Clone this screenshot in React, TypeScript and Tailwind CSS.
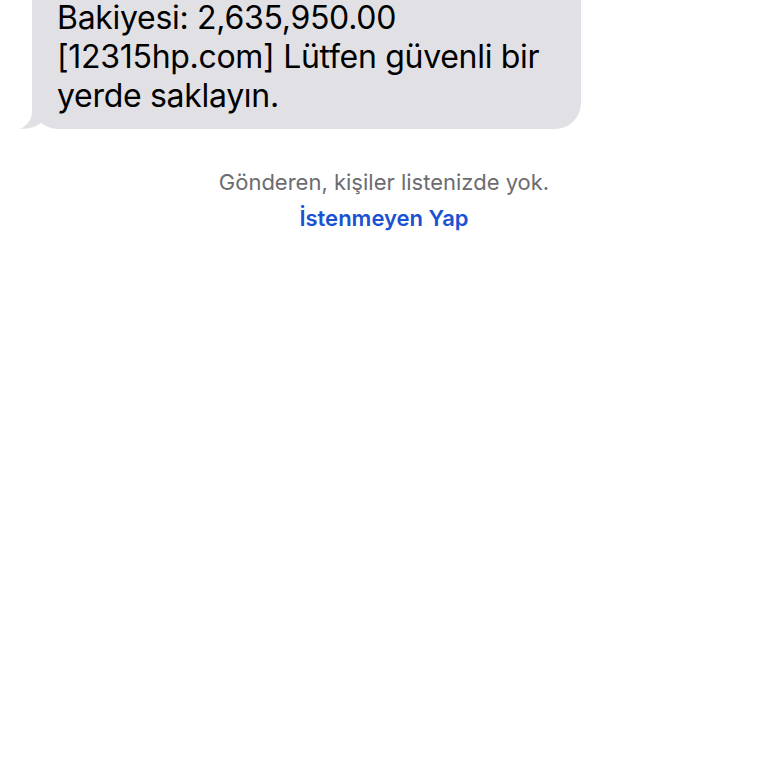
export default function App() {
    return (
        <div
            className="w-[768px] h-[768px] bg-white overflow-hidden"
            style={{ fontFamily: "Inter, 'Noto Sans', sans-serif" }}
        >
            <div className="relative ml-[32px] mt-[-40px] w-[549px]">
                <div className="bg-[#e1e1e5] rounded-[26px] pl-[25px] pr-4 pt-[38px] pb-[14px] text-[32px] leading-[39px] text-black tracking-[-0.3px]">
                    <div>Bakiyesi: 2,635,950.00</div>
                    <div>[12315hp.com] Lütfen güvenli bir</div>
                    <div>yerde saklayın.</div>
                </div>
                <svg
                    className="absolute left-[-14px] bottom-0"
                    width="40"
                    height="28"
                    viewBox="0 0 40 28"
                >
                    <path
                        d="M14 0 L14 10 C14 18 10 24 2 28 C12 28 20 25 26 20 L40 20 L40 0 Z"
                        fill="#e1e1e5"
                    />
                </svg>
            </div>
            <div className="flex flex-col items-center mt-[39px]">
                <div className="text-[22px] leading-[28px] text-[#6c6c70]">
                    Gönderen, kişiler listenizde yok.
                </div>
                <div className="mt-[8px] text-[22px] leading-[28px] font-semibold text-[#1a52d4]">
                    İstenmeyen Yap
                </div>
            </div>
        </div>
    );
}
